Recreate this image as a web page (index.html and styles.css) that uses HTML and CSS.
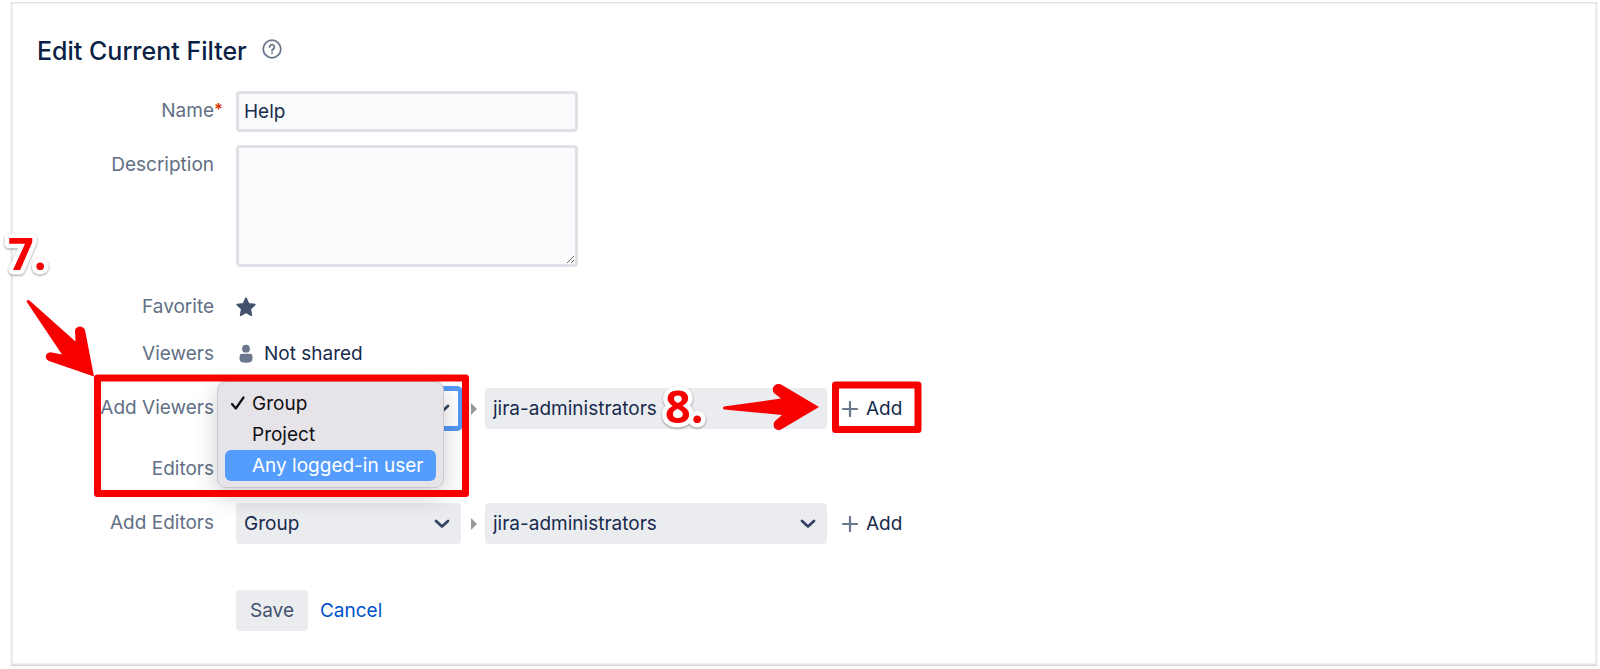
FILE: index.html
```html
<!DOCTYPE html>
<html lang="en">
<head>
<meta charset="utf-8">
<title>Edit Current Filter</title>
<link rel="stylesheet" href="styles.css">
</head>
<body>
<main class="panel">
  <header class="heading">
    <h1 class="title">Edit Current Filter</h1>
    <a class="help" href="#" aria-label="Help">
      <svg width="20" height="20" viewBox="0 0 20 20" fill="none" stroke="currentColor" stroke-width="1.8" stroke-linecap="round"><circle cx="10" cy="10" r="8.8"/><path d="M7.600 8a2.400 2.400 0 1 1 3.600 2.100c-.9.5-1.200.9-1.200 1.700"/><circle cx="10" cy="14.200" r=".5" fill="currentColor" stroke-width="1"/></svg>
    </a>
  </header>

  <form class="form">
    <div class="row">
      <label class="label" for="name">Name<span class="required">*</span></label>
      <input class="field" id="name" type="text" value="Help">
    </div>
    <div class="row">
      <label class="label" for="description">Description</label>
      <textarea class="field field-area" id="description"></textarea>
    </div>
    <div class="row row-plain row-apart">
      <span class="label">Favorite</span>
      <button class="star" type="button" aria-label="Favorite" aria-pressed="true">
        <svg width="20" height="20" viewBox="0 0 20 20" fill="currentColor" stroke="currentColor" stroke-width="1.6" stroke-linejoin="round"><path d="M10 1.200l2.600 5.600 6.200.8-4.500 4.200 1.100 6.500L10 15.200l-5.400 3.100 1.100-6.500L1.200 7.600l6.200-.8z"/></svg>
      </button>
    </div>
    <div class="row row-plain">
      <span class="label">Viewers</span>
      <span class="viewer">
        <svg width="20" height="20" viewBox="0 0 20 20" fill="currentColor"><circle cx="10" cy="4.700" r="3.900"/><path d="M3.600 12.200q0-2.400 2.400-2.400h8q2.400 0 2.400 2.400v3q0 3.600-6.400 3.600t-6.400-3.600z"/></svg>
        Not shared
      </span>
    </div>
    <div class="row row-picker">
      <label class="label" for="viewer-type">Add Viewers</label>
      <div class="picker">
        <div class="select-box select-type">
          <select class="select select-open" id="viewer-type"><option>Group</option><option>Project</option><option>Any logged-in user</option></select>
          <svg class="chevron" width="16" height="10" viewBox="0 0 16 10" fill="none" stroke="currentColor" stroke-width="2.800" stroke-linecap="round" stroke-linejoin="round"><path d="M2 2l6 5.500L14 2"/></svg>
          <ul class="menu" role="listbox" aria-label="Viewer type">
            <li class="option" role="option" aria-selected="true"><svg class="tick" width="16" height="16" viewBox="0 0 16 16" fill="none" stroke="currentColor" stroke-width="2.200" stroke-linecap="round" stroke-linejoin="round"><path d="M2 9l3.800 4.500L13.500 2.500"/></svg>Group</li>
            <li class="option" role="option" aria-selected="false">Project</li>
            <li class="option option-active" role="option" aria-selected="false">Any logged-in user</li>
          </ul>
        </div>
        <span class="arrow"></span>
        <div class="select-box select-group">
          <select class="select" aria-label="Viewer group"><option>jira-administrators</option></select>
          <svg class="chevron" width="16" height="10" viewBox="0 0 16 10" fill="none" stroke="currentColor" stroke-width="2.800" stroke-linecap="round" stroke-linejoin="round"><path d="M2 2l6 5.500L14 2"/></svg>
        </div>
        <button class="add" type="button"><svg width="16" height="16" viewBox="0 0 16 16" stroke="#6b778c" stroke-width="2.200" stroke-linecap="round"><path d="M8 1v14M1 8h14"/></svg>Add</button>
      </div>
    </div>
    <div class="row row-plain row-apart">
      <span class="label">Editors</span>
    </div>
    <div class="row row-picker">
      <label class="label" for="editor-type">Add Editors</label>
      <div class="picker">
        <div class="select-box select-type">
          <select class="select" id="editor-type"><option>Group</option><option>Project</option></select>
          <svg class="chevron" width="16" height="10" viewBox="0 0 16 10" fill="none" stroke="currentColor" stroke-width="2.800" stroke-linecap="round" stroke-linejoin="round"><path d="M2 2l6 5.500L14 2"/></svg>
        </div>
        <span class="arrow"></span>
        <div class="select-box select-group">
          <select class="select" aria-label="Editor group"><option>jira-administrators</option></select>
          <svg class="chevron" width="16" height="10" viewBox="0 0 16 10" fill="none" stroke="currentColor" stroke-width="2.800" stroke-linecap="round" stroke-linejoin="round"><path d="M2 2l6 5.500L14 2"/></svg>
        </div>
        <button class="add" type="button"><svg width="16" height="16" viewBox="0 0 16 16" stroke="#6b778c" stroke-width="2.200" stroke-linecap="round"><path d="M8 1v14M1 8h14"/></svg>Add</button>
      </div>
    </div>
    <div class="actions">
      <button class="save" type="submit">Save</button>
      <a class="cancel" href="#">Cancel</a>
    </div>
  </form>
</main>

<svg class="callouts" width="940" height="510" viewBox="0 0 940 510">
  <g fill="none" stroke="#f60000" stroke-width="7" stroke-linejoin="round">
    <rect x="97.500" y="378" width="368" height="115.500"/>
    <rect x="835.500" y="385" width="82.500" height="44.500"/>
  </g>
  <path fill="#f60000" d="M26.500 301.500Q27 299 29.500 300.500L75.500 341.500L75 331Q75 327 80 326.500Q84 327 85 330L94 376.500L49 361Q45 359 46 355Q48 351.500 52 352.500L62 354.500Z"/>
  <path fill="#f60000" d="M724 409.500Q722 408 724 406.500L781 398.500L774 393Q771 389 774.500 385.500Q778 383 782 385L819 407L781 429.500Q777 431 774.500 428Q772.500 424 775 421L782 415Z"/>
  <text class="step" x="8" y="270">7.</text>
  <text class="step" x="665" y="423">8.</text>
</svg>
</body>
</html>
```
FILE: styles.css
```css
* {
  box-sizing: border-box;
}

body {
  position: relative;
  margin: 0;
  padding: 2px 3px 2px 11px;
  background: #fff;
  color: #172b4d;
  font-family: Inter, "Liberation Sans", sans-serif;
  font-size: 19px;
  line-height: 24px;
}

button,
input,
select,
textarea {
  font: inherit;
  color: inherit;
}

.panel {
  padding: 32px 25px 33px;
  border: 1px solid #e3e3e5;
  box-shadow: 0 1px 1px #d8d8d8, inset 0 0 0 1px #f0f0f2;
}

.heading {
  display: flex;
  gap: 15px;
  margin-bottom: 24px;
}

.title {
  margin: 0;
  color: #0c1f45;
  font-size: 25px;
  font-weight: 500;
  line-height: 32px;
}

.help {
  height: 20px;
  margin-top: 4px;
  color: #6b778c;
}

.help svg {
  display: block;
}

.form {
  display: flex;
  flex-direction: column;
  gap: 13px;
}

.row {
  display: grid;
  grid-template-columns: 177px 1fr;
  column-gap: 22px;
}

.row-plain {
  min-height: 34px;
  align-items: center;
}

.row-apart {
  margin-top: 10px;
}

.row-picker {
  margin-top: 4px;
}

.label {
  position: relative;
  padding-top: 8px;
  color: #626f86;
  text-align: right;
}

.row-plain .label {
  padding-top: 0;
}

.required {
  position: absolute;
  top: 6px;
  left: 100%;
  color: #de350b;
  font-size: 16px;
  font-weight: 700;
}

.field {
  width: 342px;
  height: 41px;
  padding: 4px 5px;
  border: 3px solid #dfe1e6;
  border-radius: 4px;
  background: #fafbfc;
}

.field-area {
  display: block;
  height: 122px;
  resize: both;
}

.star {
  display: block;
  width: 20px;
  height: 20px;
  padding: 0;
  border: 0;
  background: none;
  color: #42526e;
}

.star svg {
  display: block;
}

.viewer {
  display: flex;
  align-items: center;
  gap: 8px;
}

.viewer svg {
  color: #6b778c;
}

.picker {
  display: flex;
  align-items: center;
}

.select-box {
  position: relative;
}

.select-type {
  width: 225px;
}

.select-group {
  width: 342px;
}

.select {
  display: block;
  width: 100%;
  height: 41px;
  padding: 0 8px;
  border: 0;
  border-radius: 4px;
  background: #ebecf0;
  appearance: none;
}

.select-open {
  background: #fff;
  outline: 5px solid #5597f3;
  outline-offset: -3px;
}

.chevron {
  position: absolute;
  top: 16px;
  right: 11px;
  color: #344563;
  pointer-events: none;
}

.arrow {
  margin: 0 8px 0 10px;
  border: 6px solid transparent;
  border-left: 6px solid #999;
  border-right: 0;
}

.add {
  display: flex;
  align-items: center;
  gap: 8px;
  margin-left: 15px;
  padding: 0;
  border: 0;
  background: none;
}

.menu {
  position: absolute;
  z-index: 1;
  top: -7px;
  left: -19px;
  width: 227px;
  margin: 0;
  padding: 6px 7px;
  border: 1px solid #cbc8cf;
  border-radius: 9px;
  background: #e6e3e9;
  box-shadow: 0 8px 24px rgba(0, 0, 0, 0.2);
  color: #111;
  list-style: none;
}

.option {
  position: relative;
  padding: 4px 0 4px 27px;
  border-radius: 6px;
  line-height: 23px;
  white-space: nowrap;
}

.option-active {
  background: #559cff;
  color: #fff;
}

.tick {
  position: absolute;
  top: 7px;
  left: 5px;
}

.actions {
  display: flex;
  align-items: center;
  gap: 12px;
  margin-top: 33px;
  padding-left: 199px;
}

.save {
  height: 41px;
  padding: 0 14px;
  border: 0;
  border-radius: 4px;
  background: #ebecf0;
  color: #42526e;
}

.cancel {
  color: #0052cc;
  text-decoration: none;
}

.callouts {
  position: absolute;
  z-index: 2;
  top: 0;
  left: 0;
  pointer-events: none;
}

.step {
  fill: #f60000;
  stroke: #fff;
  stroke-width: 9px;
  stroke-linejoin: round;
  paint-order: stroke;
  filter: drop-shadow(0 1px 1px rgba(0, 0, 0, 0.4));
  font-family: "Open Sans", sans-serif;
  font-size: 45px;
  font-weight: 700;
}
```
